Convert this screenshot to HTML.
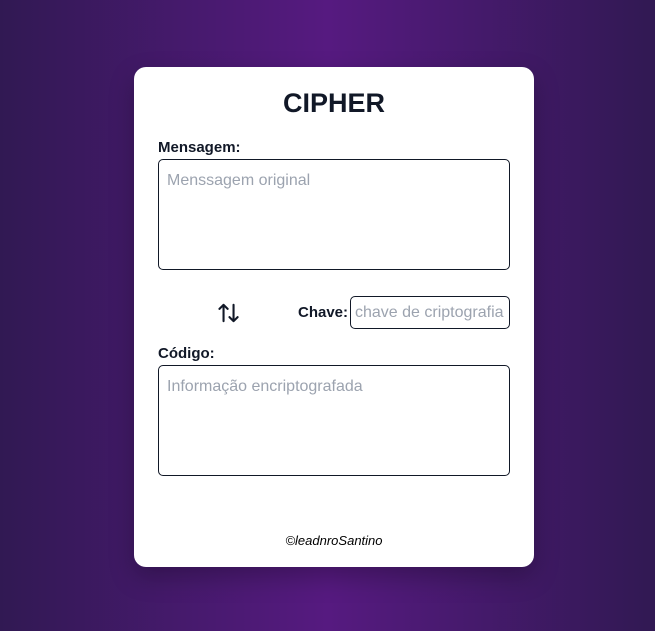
<!DOCTYPE html>
<html><head><meta charset="utf-8"><style>
*{box-sizing:border-box;margin:0;padding:0}
body{width:655px;height:631px;overflow:hidden;background:linear-gradient(to right,#311953 0%,#561a80 50%,#311953 100%);font-family:"Liberation Sans","DejaVu Sans",sans-serif;color:#111827;position:relative}
.card{position:absolute;left:134px;top:67px;width:400px;height:500px;background:#fff;border-radius:12px;box-shadow:0 10px 25px rgba(0,0,0,.25)}
h1{position:absolute;top:21px;left:0;width:100%;text-align:center;font-size:27px;font-weight:bold}
.lbl{position:absolute;left:24px;font-size:15px;font-weight:bold}
.box{position:absolute;left:24px;width:352px;height:111px;border:1px solid #111827;border-radius:5px;padding:12px 8px;font-size:16px;color:#9ca3af}
.key{position:absolute;left:216px;top:229px;width:160px;height:33px;border:1px solid #111827;border-radius:5px;font-size:16px;color:#9ca3af;padding:7px 0 0 4px;white-space:nowrap;overflow:hidden}
.foot{position:absolute;top:466px;width:100%;text-align:center;font-size:13px;font-style:italic;color:#000}
</style></head><body>
<div class="card">
<h1>CIPHER</h1>
<div class="lbl" style="top:72px">Mensagem:</div>
<div class="box" style="top:92px">Menssagem original</div>
<svg style="position:absolute;left:84px;top:236px" width="22" height="20" viewBox="0 0 24 22" fill="none" stroke="#111827" stroke-width="2.3" stroke-linecap="round" stroke-linejoin="round"><path d="M6 20V2M1.5 6.5L6 2l4.5 4.5"/><path d="M17 2v18M12.5 15.5L17 20l4.5-4.5"/></svg>
<div class="lbl" style="top:237px;left:164px">Chave:</div>
<div class="key">chave de criptografia</div>
<div class="lbl" style="top:278px">Código:</div>
<div class="box" style="top:298px">Informação encriptografada</div>
<div class="foot">©leadnroSantino</div>
</div>
</body></html>
